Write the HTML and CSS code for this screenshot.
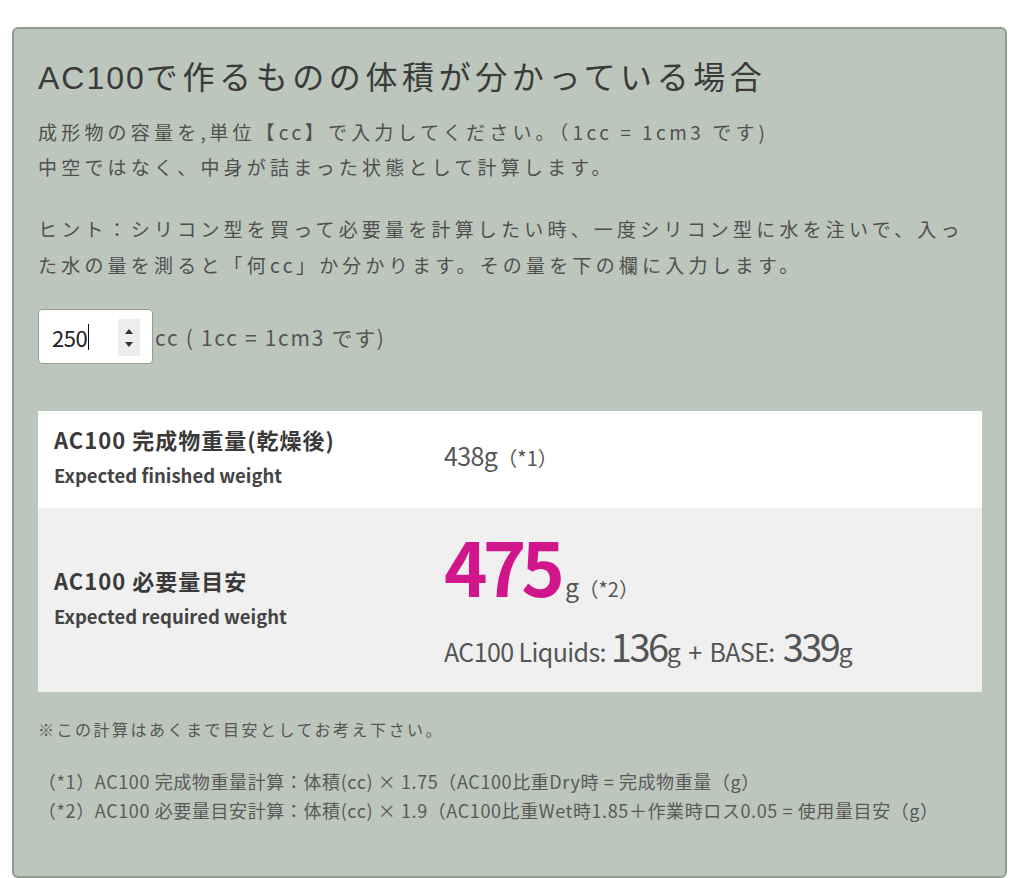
FILE: index.html
```html
<!DOCTYPE html>
<html lang="ja">
<head>
<meta charset="utf-8">
<title>AC100 計算</title>
<link rel="stylesheet" href="styles.css">
</head>
<body>
<div class="panel">
  <h2 class="title"><span class="t-lat">AC100</span>で作るものの体積が分かっている場合</h2>
  <p class="desc">成形物の容量を<span class="lat">,</span>単位【<span class="lat">cc</span>】で入力してください。（<span class="lat">1cc = 1cm3 </span>です<span class="lat">)</span><br>中空ではなく、中身が詰まった状態として計算します。</p>
  <p class="desc hint">ヒント：シリコン型を買って必要量を計算したい時、一度シリコン型に水を注いで、入っ<br>た水の量を測ると「何<span class="lat">cc</span>」か分かります。その量を下の欄に入力します。</p>
  <div class="inputrow">
    <div class="numbox">
      <span class="numval">250</span><span class="caret"></span>
      <span class="spin"><span class="up"></span><span class="down"></span></span>
    </div>
    <span class="unit">cc ( 1cc = 1cm3 です)</span>
  </div>
  <div class="results">
    <div class="row r1">
      <div class="label">
        <div class="jp">AC100 完成物重量(乾燥後)</div>
        <div class="en">Expected finished weight</div>
      </div>
      <div class="val">
        <div class="line1"><span class="small">438g</span><span class="ref">（*1）</span></div>
      </div>
    </div>
    <div class="row r2">
      <div class="label">
        <div class="jp">AC100 必要量目安</div>
        <div class="en">Expected required weight</div>
      </div>
      <div class="val">
        <div class="bigline"><span class="big">475</span><span class="small">g</span><span class="ref">（*2）</span></div>
        <div class="subline"><span class="small">AC100 Liquids:&nbsp;</span><span class="mid">136</span><span class="small plus">g + BASE:&nbsp;</span><span class="mid">339</span><span class="small">g</span></div>
      </div>
    </div>
  </div>
  <p class="note">※この計算はあくまで目安としてお考え下さい。</p>
  <p class="foot">（*1）AC100 完成物重量計算：体積(cc) × 1.75（AC100比重Dry時 = 完成物重量（g）<br>（*2）AC100 必要量目安計算：体積(cc) × 1.9（AC100比重Wet時1.85＋作業時ロス0.05 = 使用量目安（g）</p>
</div>
</body>
</html>
```

FILE: styles.css
```css
html, body {
  margin: 0;
  padding: 0;
  background: #ffffff;
}

body {
  font-family: "Noto Sans CJK JP", "Noto Sans", sans-serif;
  color: #555555;
}

.panel {
  margin: 27px 17px 0 12px;
  border: 2px solid #8f9d8c;
  border-radius: 6px;
  background: #bcc6bc;
  padding: 25px 23px 51px 24px;
}

.title {
  margin: 0 0 12px 0;
  font-family: "Liberation Sans", "Noto Sans CJK JP", sans-serif;
  font-weight: 400;
  font-size: 32px;
  line-height: 48px;
  letter-spacing: 4.6px;
  color: #3a3a3a;
}

.t-lat {
  letter-spacing: 2px;
}

.desc {
  margin: 0;
  font-size: 19px;
  line-height: 35px;
  letter-spacing: 4.2px;
  color: #505050;
}

.desc .lat {
  letter-spacing: 3.5px;
}

.hint {
  margin-top: 27px;
  line-height: 36px;
}

.inputrow {
  margin-top: 26px;
  display: flex;
  align-items: center;
  gap: 2px;
}

.numbox {
  box-sizing: border-box;
  width: 115px;
  height: 55px;
  background: #ffffff;
  border: 1px solid #9a9a9a;
  border-radius: 4px;
  display: flex;
  align-items: center;
  padding-left: 13px;
  position: relative;
}

.numval {
  font-size: 22px;
  color: #222222;
  letter-spacing: -0.5px;
}

.caret {
  width: 1px;
  height: 26px;
  background: #111111;
  margin-left: 1px;
}

.spin {
  position: absolute;
  right: 12px;
  top: 9px;
  width: 22px;
  height: 37px;
  background: #ededed;
  display: flex;
  flex-direction: column;
  align-items: center;
  justify-content: center;
  gap: 8px;
}

.up {
  width: 0;
  height: 0;
  border-left: 4px solid transparent;
  border-right: 4px solid transparent;
  border-bottom: 5px solid #333333;
}

.down {
  width: 0;
  height: 0;
  border-left: 4px solid transparent;
  border-right: 4px solid transparent;
  border-top: 5px solid #333333;
}

.unit {
  font-size: 21px;
  letter-spacing: 1.7px;
  color: #555555;
}

.results {
  margin-top: 47px;
}

.row {
  display: grid;
  grid-template-columns: 406px 1fr;
  align-items: center;
}

.r1 {
  background: #ffffff;
  height: 97px;
}

.r2 {
  background: #f0f0f0;
  height: 184px;
}

.label {
  padding-left: 16px;
  padding-bottom: 5px;
}

.label .jp {
  font-size: 22px;
  line-height: 36px;
  font-weight: 700;
  letter-spacing: 1px;
  color: #3a3a3a;
}

.label .en {
  font-size: 18.5px;
  line-height: 36px;
  font-weight: 700;
  color: #444444;
}

.val {
  color: #555555;
}

.r1 .val {
  padding-bottom: 8px;
}

.r2 .val {
  padding-bottom: 7px;
}

.line1,
.bigline,
.subline {
  display: flex;
  align-items: baseline;
}

.line1 > span,
.bigline > span,
.subline > span {
  line-height: 1;
  white-space: pre;
}

.small {
  font-size: 25px;
  letter-spacing: -0.6px;
}

.plus {
  word-spacing: 3px;
}

.ref {
  font-size: 20px;
}

.big {
  font-size: 74px;
  font-weight: 700;
  letter-spacing: -5px;
  color: #d1168b;
}

.bigline .small {
  margin-left: 5px;
}

.mid {
  font-size: 38px;
  letter-spacing: -2.5px;
}

.subline {
  margin-top: 25px;
}

.note {
  margin: 25px 0 0 0;
  font-size: 16px;
  line-height: 24px;
  letter-spacing: 2.5px;
  color: #555555;
}

.foot {
  margin: 26px 0 0 0;
  font-size: 18px;
  line-height: 29px;
  letter-spacing: 0.6px;
  color: #5a5a5a;
}
```
